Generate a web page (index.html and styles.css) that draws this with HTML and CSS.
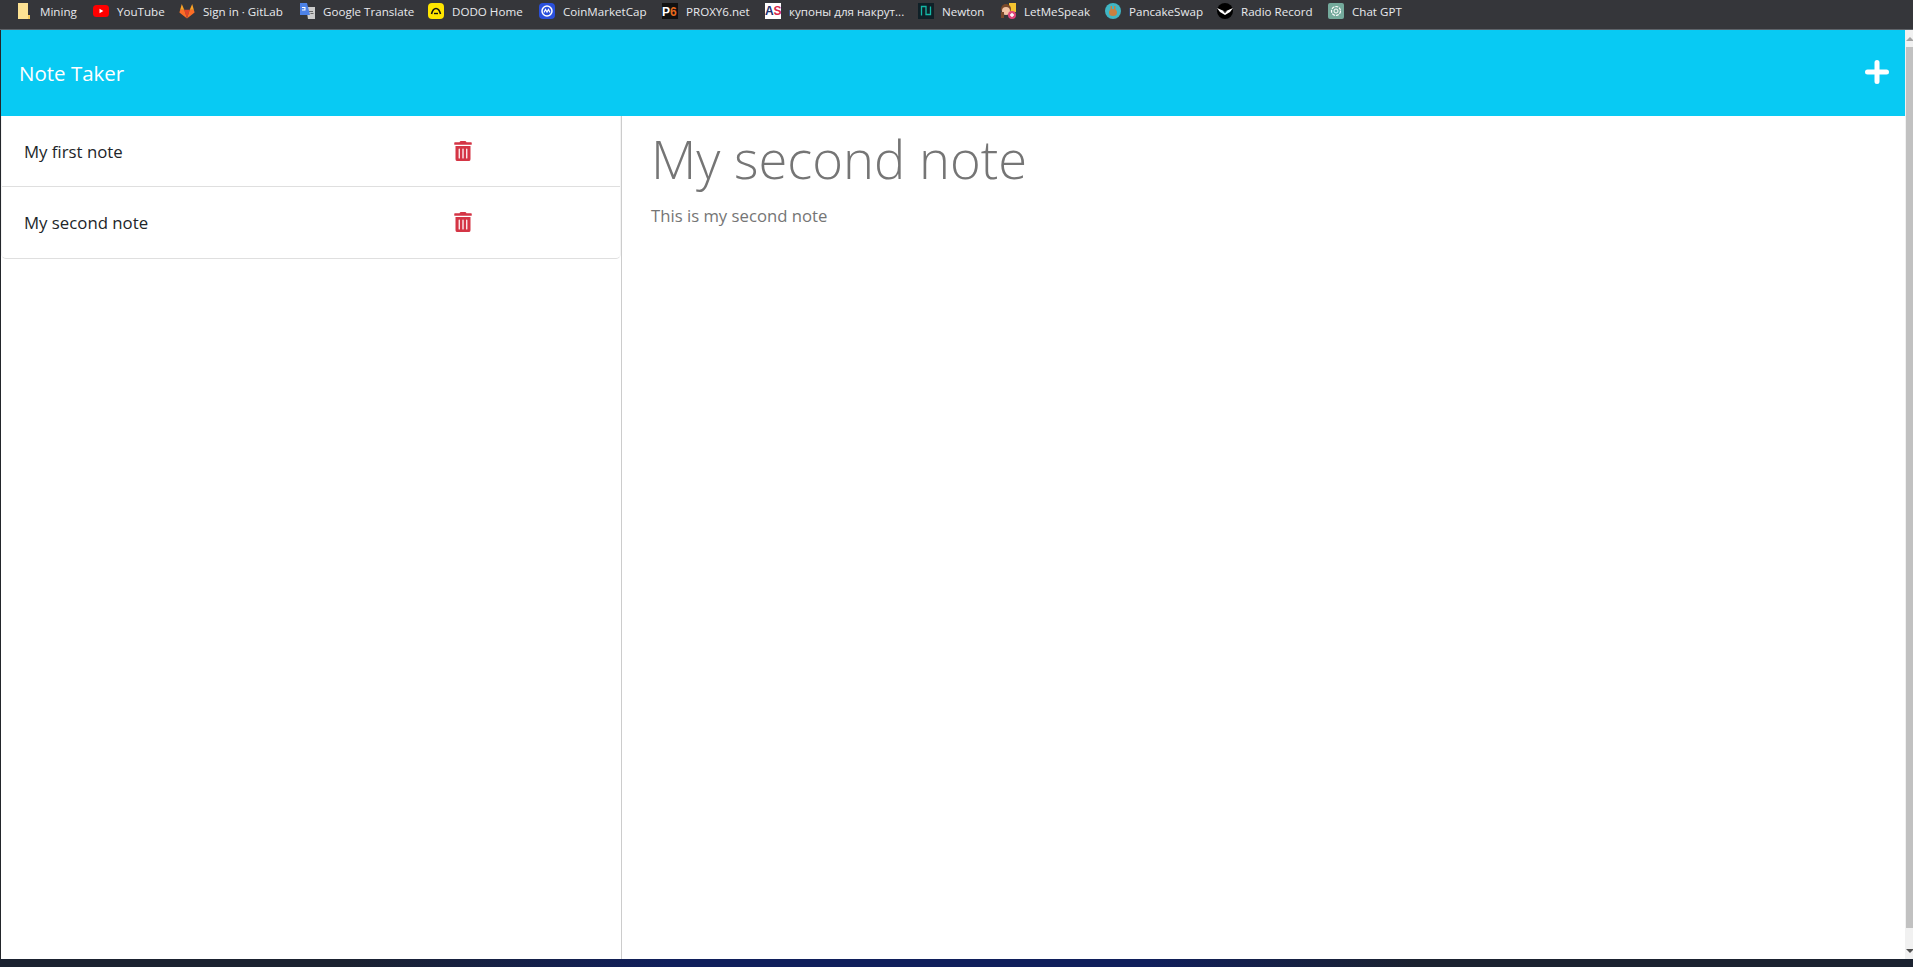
FILE: index.html
```html
<!DOCTYPE html>
<html>
<head>
	<meta charset="utf-8">
	<meta name="viewport" content="width=device-width, initial-scale=1">
	<title>Note Taker</title>
	<link rel="stylesheet" href="styles.css">
</head>
<body>
	<div class="bookmarks">
		<a class="mark"><svg viewBox="0 0 16 16"><path fill="#fde293" d="M2 0h10v14l2 1v1H2z"/><path fill="#f5c95e" d="M12 12h2v4h-2z"/></svg><span>Mining</span></a>
		<a class="mark"><svg viewBox="0 0 16 16"><rect y="2" width="16" height="12" rx="3.5" fill="#f00"/><path fill="#fff" d="M6.5 5.8v4.4L10.300 8z"/></svg><span>YouTube</span></a>
		<a class="mark"><svg viewBox="0 0 16 16"><path fill="#e24329" d="M8 15.500 5.200 6.800h5.600z"/><path fill="#fc6d26" d="M8 15.500 .4 9.600l1-3h3.800zM8 15.500l7.600-5.900-1-3h-3.800z"/><path fill="#fca326" d="M.4 9.600 2.800 1l2.400 5.800H1.400zM15.600 9.600 13.200 1l-2.400 5.800h3.800z"/></svg><span>Sign in · GitLab</span></a>
		<a class="mark"><svg viewBox="0 0 16 16"><path fill="#ccc" d="M7 4h9v12H9z"/><path fill="#666" d="M10 8h4v1h-4zM11.500 10h3v1h-3z"/><path fill="#4d82e8" d="M1 0h7l3 12H1z"/><path fill="#fff" d="M3 4h3.500v3.500H3V6.500h2.400V5H3z"/></svg><span>Google Translate</span></a>
		<a class="mark"><svg viewBox="0 0 16 16"><rect width="16" height="16" rx="4" fill="#ffe600"/><path fill="none" stroke="#111" stroke-width="1.600" d="M3.500 11C4.500 7 6 5.500 8 5.500s3.500 1.500 4.500 5.500"/><path stroke="#111" stroke-width="1.400" d="M6 10.500h4"/></svg><span>DODO Home</span></a>
		<a class="mark"><svg viewBox="0 0 16 16"><rect width="16" height="16" rx="4" fill="#2a50dc"/><circle cx="8" cy="8" r="5" fill="none" stroke="#fff" stroke-width="1.500"/><path fill="none" stroke="#fff" stroke-width="1.200" d="M5 9.500 6.500 6.500 8 9l1.500-2.500L11 9.500"/></svg><span>CoinMarketCap</span></a>
		<a class="mark"><svg viewBox="0 0 16 16"><rect width="16" height="16" fill="#111"/><text x="0" y="13" class="glyph glyph-white">P</text><text x="8" y="13" class="glyph glyph-orange">6</text></svg><span>PROXY6.net</span></a>
		<a class="mark"><svg viewBox="0 0 16 16"><rect width="16" height="16" fill="#fff"/><text x="0" y="12" class="glyph glyph-navy">A</text><text x="8.500" y="12" class="glyph glyph-red">S</text></svg><span>купоны для накрут...</span></a>
		<a class="mark"><svg viewBox="0 0 16 16"><rect width="16" height="16" fill="#0f2027"/><path fill="none" stroke="#14b8a6" stroke-width="1.300" d="M3.500 12.500V3.500h4.500v8h4.500V3.500"/></svg><span>Newton</span></a>
		<a class="mark"><svg viewBox="0 0 16 16"><rect x="9" width="7" height="9" fill="#f4c430"/><circle cx="6" cy="6" r="5" fill="#7a4a2b"/><circle cx="6" cy="8" r="4" fill="#f3c4a4"/><path fill="#7a4a2b" d="M1 9h3v6H1z"/><circle cx="12" cy="12" r="4" fill="#e0457b"/><path fill="#fff" d="M11.300 10h1.400v4h-1.400zM10 11.300h4v1.400h-4z"/></svg><span>LetMeSpeak</span></a>
		<a class="mark"><svg viewBox="0 0 16 16"><circle cx="8" cy="8" r="8" fill="#3fb6c4"/><ellipse cx="8" cy="9.500" rx="4" ry="3.500" fill="#c9803f"/><path fill="#c9803f" d="M5.500 7V3h1.500v4zM9 7V3h1.500v4z"/></svg><span>PancakeSwap</span></a>
		<a class="mark"><svg viewBox="0 0 16 16"><circle cx="8" cy="8" r="8" fill="#000"/><path fill="#fff" d="M0 5l8 3.500L16 5l-3 4-5 3-5-3z"/><path fill="#000" d="M6 8.300h4L8 10z"/></svg><span>Radio Record</span></a>
		<a class="mark"><svg viewBox="0 0 16 16"><rect width="16" height="16" rx="2" fill="#74aa9c"/><circle cx="8" cy="8" r="4.500" fill="none" stroke="#fff" stroke-width="1.200" stroke-dasharray="3 1"/><circle cx="8" cy="8" r="2" fill="none" stroke="#fff"/></svg><span>Chat GPT</span></a>
	</div>

	<div class="window">
		<div class="app">
			<header class="navbar">
				<span class="brand">Note Taker</span>
				<svg class="plus" viewBox="0 0 24 24"><path d="M12 2.500v19M2.500 12h19"/></svg>
			</header>
			<div class="content">
				<div class="sidebar">
					<ul class="notes">
						<li class="note">
							<span class="note-title">My first note</span>
							<svg class="trash" viewBox="0 0 448 512"><path d="M32 464a48 48 0 0 0 48 48h288a48 48 0 0 0 48-48V128H32zm272-256a16 16 0 0 1 32 0v224a16 16 0 0 1-32 0zm-96 0a16 16 0 0 1 32 0v224a16 16 0 0 1-32 0zm-96 0a16 16 0 0 1 32 0v224a16 16 0 0 1-32 0zM432 32H312l-9.400-18.700A24 24 0 0 0 281.100 0H166.800a23.720 23.720 0 0 0-21.400 13.300L136 32H16A16 16 0 0 0 0 48v32a16 16 0 0 0 16 16h416a16 16 0 0 0 16-16V48a16 16 0 0 0-16-16z"/></svg>
						</li>
						<li class="note">
							<span class="note-title">My second note</span>
							<svg class="trash" viewBox="0 0 448 512"><path d="M32 464a48 48 0 0 0 48 48h288a48 48 0 0 0 48-48V128H32zm272-256a16 16 0 0 1 32 0v224a16 16 0 0 1-32 0zm-96 0a16 16 0 0 1 32 0v224a16 16 0 0 1-32 0zm-96 0a16 16 0 0 1 32 0v224a16 16 0 0 1-32 0zM432 32H312l-9.400-18.700A24 24 0 0 0 281.100 0H166.800a23.720 23.720 0 0 0-21.400 13.300L136 32H16A16 16 0 0 0 0 48v32a16 16 0 0 0 16 16h416a16 16 0 0 0 16-16V48a16 16 0 0 0-16-16z"/></svg>
						</li>
					</ul>
				</div>
				<div class="editor">
					<div class="editor-title">My second note</div>
					<div class="editor-text">This is my second note</div>
				</div>
			</div>
		</div>
		<div class="scrollbar">
			<div class="arrow arrow-up"></div>
			<div class="thumb"></div>
			<div class="arrow arrow-down"></div>
		</div>
	</div>

	<div class="desktop"></div>
</body>
</html>
```

FILE: styles.css
```css
html, body{
	height: 100%;
}
body{
	margin: 0;
	display: flex;
	flex-direction: column;
	overflow: hidden;
	background-color: #fff;
	font-family: "Open Sans", "Noto Sans", Arial, sans-serif;
	color: #212529;
}

/* browser bookmarks bar */
.bookmarks{
	height: 22px;
	padding: 0 0 7px 16px;
	display: grid;
	grid-template-columns: 77px 86px 120px 129px 111px 123px 103px 153px 82px 105px 112px 111px auto;
	align-items: center;
	background-color: #35363a;
	border-bottom: 1px solid #5f6368;
}
.mark{
	display: flex;
	align-items: center;
	gap: 8px;
	font-size: 11.600px;
	color: #e8eaed;
	white-space: nowrap;
}
.mark svg{
	width: 16px;
	height: 16px;
	flex-shrink: 0;
}
.glyph{
	font-family: "Liberation Sans", Arial, sans-serif;
	font-size: 12px;
	font-weight: bold;
}
.glyph-white{ fill: #fff; }
.glyph-orange{ fill: #e8691c; }
.glyph-navy{ fill: #1d2f6f; }
.glyph-red{ fill: #d9264a; }

.window{
	flex: 1;
	min-height: 0;
	display: flex;
	border-left: 1px solid #23262b;
}
.app{
	flex: 1;
	min-width: 0;
	display: flex;
	flex-direction: column;
}

.navbar{
	height: 86px;
	padding: 0 16px 0 18px;
	display: flex;
	align-items: center;
	justify-content: space-between;
	background-color: #08caf3;
}
.brand{
	font-size: 20.500px;
	color: #fff;
}
.plus{
	width: 24px;
	height: 24px;
	margin-bottom: 2px;
	fill: none;
	stroke: #fff;
	stroke-width: 5;
	stroke-linecap: round;
}

.content{
	flex: 1;
	min-height: 0;
	display: flex;
}
.sidebar{
	width: 620px;
	flex-shrink: 0;
	border-right: 1px solid #ccc;
}
.notes{
	list-style: none;
	margin: 0;
	padding: 0 0 1px;
	border: 1px solid #f3f3f3;
	border-top: none;
	border-bottom-color: #dfdfdf;
	border-radius: 0 0 5px 5px;
}
.note{
	height: 70px;
	padding: 0 148px 0 22px;
	display: flex;
	align-items: center;
	justify-content: space-between;
}
.note + .note{
	border-top: 1px solid #dfdfdf;
}
.note-title{
	font-size: 16.800px;
}
.trash{
	width: 18px;
	height: 20px;
	fill: #d43545;
}

.editor{
	flex: 1;
	padding: 5px 29px;
	color: #757575;
}
.editor-title{
	font-size: 52.500px;
	font-weight: 300;
	line-height: 76px;
}
.editor-text{
	margin-top: 7px;
	font-size: 16.700px;
	line-height: 24px;
}

.scrollbar{
	width: 8px;
	display: flex;
	flex-direction: column;
	align-items: flex-end;
	background-color: #f1f1f1;
}
.arrow{
	height: 17px;
	width: 7px;
	display: flex;
	align-items: center;
}
.arrow::before{
	content: "";
	border-left: 4px solid transparent;
	border-right: 4px solid transparent;
}
.arrow-up::before{
	border-bottom: 4px solid #a3a3a3;
}
.arrow-down::before{
	border-top: 4px solid #505050;
}
.thumb{
	width: 7px;
	flex: 1;
	margin-bottom: 14px;
	background-color: #c1c1c1;
}

/* bit of the desktop showing under the window */
.desktop{
	height: 8px;
	background: linear-gradient(90deg, #1b2230 0, #1b2230 18%, #101f5c 35%, #101f5c 60%, #1b2230 74%, #1b2230 100%);
}
```
